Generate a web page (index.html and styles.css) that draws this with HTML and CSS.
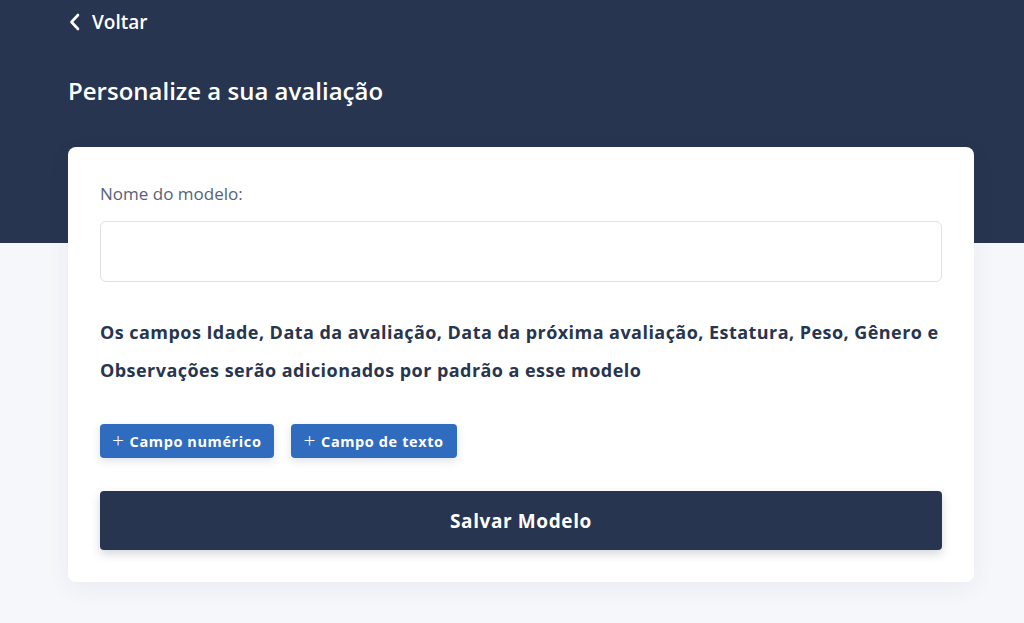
FILE: index.html
```html
<!DOCTYPE html>
<html lang="pt">
<head>
<meta charset="utf-8">
<link rel="stylesheet" href="styles.css">
</head>
<body>
<div class="page">
  <header class="hero">
    <a class="back" href="#">
      <svg class="back-icon" width="14" height="18" viewBox="0 0 14 18"><path d="M10 2 L3.5 9 L10 16" fill="none" stroke="#fff" stroke-width="2.6" stroke-linecap="round" stroke-linejoin="round"/></svg>
      <span>Voltar</span>
    </a>
    <h1 class="title">Personalize a sua avaliação</h1>
  </header>
  <main class="card">
    <label class="label" for="nome">Nome do modelo:</label>
    <input class="input" id="nome" type="text">
    <p class="info">Os campos Idade, Data da avaliação, Data da próxima avaliação, Estatura, Peso, Gênero e Observações serão adicionados por padrão a esse modelo</p>
    <div class="actions">
      <button class="add-btn"><span class="plus">+</span>Campo numérico</button>
      <button class="add-btn"><span class="plus">+</span>Campo de texto</button>
    </div>
    <button class="save-btn">Salvar Modelo</button>
  </main>
</div>
</body>
</html>
```
FILE: styles.css
```css
* { box-sizing: border-box; }
html, body { margin: 0; padding: 0; }
body {
  background: #f6f7fb;
  font-family: "Open Sans", "Noto Sans", sans-serif;
  color: #283550;
}
.page { position: relative; }
.page::before {
  content: "";
  position: absolute;
  left: 0; right: 0; top: 0;
  height: 243px;
  background: #283550;
  z-index: 0;
}
.hero {
  position: relative;
  z-index: 1;
  padding: 9px 68px 0;
}
.back {
  display: flex;
  align-items: center;
  gap: 10px;
  color: #fff;
  text-decoration: none;
  font-size: 19px;
  font-weight: 600;
  height: 26px;
}
.back-icon { display: block; }
.title {
  margin: 41px 0 0;
  color: #fff;
  font-size: 24px;
  font-weight: 600;
  letter-spacing: 0;
  line-height: 30px;
}
.card {
  position: relative;
  z-index: 1;
  margin: 41px 50px 40px 68px;
  background: #fff;
  border-radius: 8px;
  padding: 36px 32px 32px;
  box-shadow: 0 6px 24px rgba(40, 53, 80, 0.06);
  display: flex;
  flex-direction: column;
}
.label {
  font-size: 17px;
  font-weight: 500;
  color: #56627a;
  line-height: 22px;
}
.input {
  margin-top: 16px;
  height: 61px;
  border: 1px solid #dfe0ea;
  border-radius: 6px;
  font: inherit;
}
.info {
  margin: 31px 0 0;
  font-size: 18px;
  font-weight: 700;
  letter-spacing: 0.45px;
  line-height: 38px;
  color: #283550;
}
.actions {
  display: flex;
  gap: 17px;
  margin-top: 35px;
}
.add-btn {
  height: 34px;
  padding: 0 13px 0 12px;
  background: #2f6cbf;
  color: #fff;
  border: none;
  border-radius: 4px;
  font-family: inherit;
  font-size: 14.5px;
  font-weight: 700;
  letter-spacing: 0.6px;
  display: flex;
  align-items: center;
  box-shadow: 0 3px 8px rgba(40, 53, 80, 0.15);
}
.plus {
  font-weight: 300;
  font-size: 21px;
  margin-right: 5px;
  line-height: 1;
  position: relative;
  top: -1px;
}
.save-btn {
  margin-top: 33px;
  height: 59px;
  background: #283550;
  color: #fff;
  border: none;
  border-radius: 4px;
  font-family: inherit;
  font-size: 19px;
  font-weight: 700;
  letter-spacing: 0.6px;
  box-shadow: 0 4px 10px rgba(40, 53, 80, 0.2);
}
```
